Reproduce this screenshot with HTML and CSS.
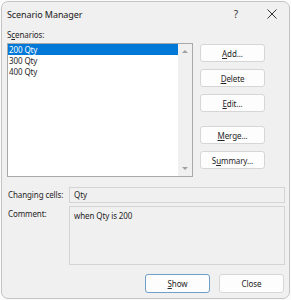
FILE: index.html
```html
<!DOCTYPE html>
<html lang="en">
<head>
    <meta charset="UTF-8">
    <title>Scenario Manager</title>
    <link rel="stylesheet" href="styles.css">
</head>
<body>
    <div class="window">
        <div class="title-bar">
            <span class="title">Scenario Manager</span>
            <span class="help">?</span>
            <svg class="close-x" width="10" height="10" viewBox="0 0 10 10">
                <path d="M0.5 0.5 L9.5 9.5 M9.5 0.5 L0.5 9.5" stroke="#333" stroke-width="1" fill="none"/>
            </svg>
        </div>

        <div class="content">
            <div class="label-top">S<u>c</u>enarios:</div>

            <div class="main-row">
                <div class="listbox">
                    <div class="list-items">
                        <div class="item selected">200 Qty</div>
                        <div class="item">300 Qty</div>
                        <div class="item">400 Qty</div>
                    </div>
                    <div class="scrollbar">
                        <span class="arrow up"></span>
                        <span class="arrow down"></span>
                    </div>
                </div>

                <div class="side-buttons">
                    <button class="btn"><u>A</u>dd...</button>
                    <button class="btn"><u>D</u>elete</button>
                    <button class="btn"><u>E</u>dit...</button>
                    <button class="btn gap-top"><u>M</u>erge...</button>
                    <button class="btn">S<u>u</u>mmary...</button>
                </div>
            </div>

            <div class="fields">
                <div class="field-label">Changing cells:</div>
                <div class="field-box single">Qty</div>
                <div class="field-label">Comment:</div>
                <div class="field-box multi">when Qty is 200</div>
            </div>

            <div class="footer">
                <button class="btn wide default"><u>S</u>how</button>
                <button class="btn wide">Close</button>
            </div>
        </div>
    </div>
</body>
</html>
```

FILE: styles.css
```css
/* dialog base */
body {
    margin: 0;
    background: #fbfbfb;
    font-family: "Noto Sans", "Open Sans", sans-serif;
    font-size: 8px;
    letter-spacing: -0.1px;
    color: #262626;
}

.window {
    box-sizing: border-box;
    width: 289px;
    height: 298px;
    margin: 1px 0 0 1px;
    border: 1px solid #c4c4c4;
    border-radius: 7px;
    background: #f0f0f0;
    overflow: hidden;
}

/* title bar */
.title-bar {
    display: flex;
    align-items: center;
    height: 24px;
    padding: 0 0 0 5px;
}

.title {
    flex: 1;
    font-size: 9px;
    color: #202020;
}

.help {
    font-size: 10px;
    color: #333;
    margin-right: 29px;
}

.close-x {
    margin-right: 12px;
}

/* content */
.content {
    padding: 0 4px 0 5px;
}

.label-top {
    height: 12px;
    line-height: 12px;
    margin-top: 3px;
    margin-bottom: 2px;
}

.main-row {
    display: flex;
    gap: 7px;
}

.listbox {
    box-sizing: border-box;
    width: 186px;
    height: 134px;
    border: 1px solid #a9a9a9;
    background: #fff;
    display: flex;
}

.list-items {
    flex: 1;
}

.item {
    height: 11px;
    line-height: 11px;
    padding-left: 1px;
}

.item.selected {
    background: #0078d7;
    color: #fff;
}

.scrollbar {
    width: 14px;
    background: #f0f0f0;
    display: flex;
    flex-direction: column;
    justify-content: space-between;
    align-items: center;
    padding: 6px 0 6px;
    box-sizing: border-box;
}

.arrow {
    width: 0;
    height: 0;
    border-left: 3px solid transparent;
    border-right: 3px solid transparent;
}

.arrow.up {
    border-bottom: 3px solid #a0a0a0;
}

.arrow.down {
    border-top: 3px solid #a0a0a0;
}

/* buttons */
.side-buttons {
    display: flex;
    flex-direction: column;
    gap: 7px;
    padding-top: 1px;
}

.btn {
    box-sizing: border-box;
    width: 65px;
    height: 18px;
    padding: 0;
    border: 1px solid #d6d6d6;
    border-radius: 3px;
    background: #fdfdfd;
    font-family: inherit;
    font-size: 8px;
    letter-spacing: -0.1px;
    color: #262626;
}

.btn.gap-top {
    margin-top: 7px;
}

/* fields */
.fields {
    display: grid;
    grid-template-columns: 62px 216px;
    row-gap: 3px;
    margin-top: 10px;
}

.field-label {
    padding-left: 1px;
    line-height: 16px;
}

.field-box {
    box-sizing: border-box;
    border: 1px solid #d4d4d4;
    background: #f0f0f0;
    padding: 0 4px;
    line-height: 14px;
}

.field-box.single {
    height: 16px;
}

.field-box.multi {
    height: 59px;
    padding-top: 2px;
}

/* footer */
.footer {
    display: flex;
    justify-content: flex-end;
    gap: 9px;
    margin-top: 9px;
    padding-right: 1px;
}

.btn.wide {
    height: 19px;
}

.btn.default {
    border-color: #6f9fc8;
}
```
